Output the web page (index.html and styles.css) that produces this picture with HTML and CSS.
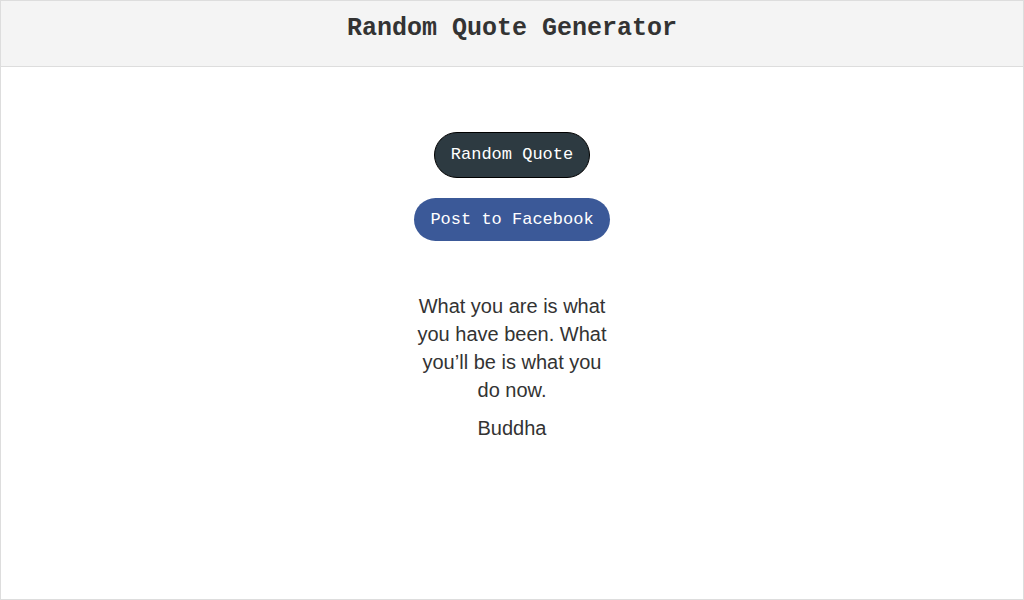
FILE: index.html
```html
<!DOCTYPE html>
<html>
<head>
<meta charset="utf-8">
<link rel="stylesheet" href="styles.css">
</head>
<body>
<div class="panel">
  <div class="panel-heading">
    <h1 class="title">Random Quote Generator</h1>
  </div>
  <div class="panel-body">
    <button class="btn btn-random">Random Quote</button>
    <button class="btn btn-fb">Post to Facebook</button>
    <div class="quote">
      <p class="quote-text">What you are is what you have been. What you’ll be is what you do now.</p>
      <p class="quote-author">Buddha</p>
    </div>
  </div>
</div>
</body>
</html>
```
FILE: styles.css
```css
html, body {
  margin: 0;
  padding: 0;
  background: #fff;
}
.panel {
  box-sizing: border-box;
  width: 1024px;
  height: 600px;
  border: 1px solid #ddd;
  display: flex;
  flex-direction: column;
}
.panel-heading {
  height: 65px;
  background: #f4f4f4;
  border-bottom: 1px solid #ddd;
  display: flex;
  align-items: center;
  justify-content: center;
}
.title {
  margin: 0 0 10px;
  font-family: "Liberation Mono", "Courier New", monospace;
  font-size: 25px;
  font-weight: bold;
  color: #333;
  line-height: 30px;
}
.panel-body {
  display: flex;
  flex-direction: column;
  align-items: center;
  padding-top: 65px;
}
.btn {
  font-family: "Liberation Mono", "Courier New", monospace;
  font-size: 17px;
  color: #fff;
  border-radius: 24px;
  cursor: pointer;
  line-height: 20px;
}
.btn-random {
  background: #2d3a41;
  border: 1px solid #000;
  height: 46px;
  padding: 0 16px;
}
.btn-fb {
  margin-top: 20px;
  background: #3b5998;
  border: none;
  height: 43px;
  padding: 0 16px;
}
.quote {
  width: 200px;
  margin-top: 51px;
  text-align: center;
  font-family: "Liberation Sans", Arial, sans-serif;
  font-size: 20px;
  line-height: 28px;
  color: #333;
}
.quote p {
  margin: 0;
}
.quote-author {
  margin-top: 10px !important;
}
```
